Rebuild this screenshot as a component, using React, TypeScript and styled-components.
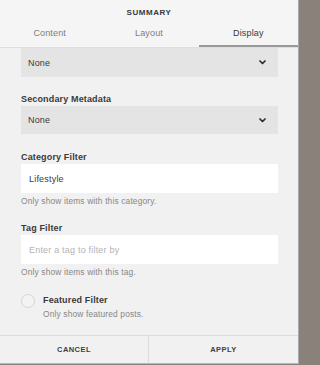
import React from "react";
import styled, { createGlobalStyle } from "styled-components";

const Global = createGlobalStyle`
  html, body { margin: 0; padding: 0; }
  body {
    background: #8a817b;
    font-family: "Liberation Sans", Arial, sans-serif;
    -webkit-font-smoothing: antialiased;
  }
`;

const Panel = styled.div`
  width: 298px;
  height: 363px;
  background: #f1f1f1;
  border-right: 1px solid #a9a9a9;
  border-bottom: 1px solid #b8b8b8;
  display: flex;
  flex-direction: column;
  overflow: hidden;
`;

const Header = styled.div`
  background: #f5f5f5;
  border-bottom: 1px solid #dedede;
`;

const Title = styled.div`
  height: 24px;
  display: flex;
  align-items: center;
  justify-content: center;
  font-size: 8px;
  font-weight: 700;
  letter-spacing: 0.55px;
  color: #3a3a3a;
`;

const Tabs = styled.div`
  display: grid;
  grid-template-columns: 1fr 1fr 1fr;
`;

const Tab = styled.div<{ $active?: boolean }>`
  height: 18px;
  padding-bottom: 3px;
  display: flex;
  align-items: center;
  justify-content: center;
  font-size: 9px;
  letter-spacing: 0.15px;
  color: ${(p) => (p.$active ? "#3a3a3a" : "#7d7d7d")};
  border-bottom: 2px solid ${(p) => (p.$active ? "#9a9a9a" : "transparent")};
`;

const Content = styled.div`
  flex: 1;
  overflow: hidden;
  padding: 0 20px 0 21px;
`;

const Field = styled.div<{ $gap?: number }>`
  margin-top: ${(p) => p.$gap ?? 16}px;
`;

const Label = styled.div`
  font-size: 9px;
  line-height: 12px;
  font-weight: 700;
  letter-spacing: 0.15px;
  color: #3a3a3a;
  margin-bottom: 1px;
`;

const Select = styled.div<{ $h?: number }>`
  height: ${(p) => p.$h ?? 28}px;
  background: #e4e4e4;
  display: flex;
  align-items: center;
  justify-content: space-between;
  padding: 0 12px 0 7px;
  font-size: 9px;
  letter-spacing: 0.15px;
  color: #3a3a3a;
`;

const Input = styled.div<{ $placeholder?: boolean }>`
  height: 29px;
  background: #ffffff;
  display: flex;
  align-items: center;
  padding: 0 8px;
  font-size: 9px;
  letter-spacing: 0.2px;
  color: ${(p) => (p.$placeholder ? "#b4b4b4" : "#3a3a3a")};
`;

const Help = styled.div<{ $tight?: boolean }>`
  margin-top: ${(p) => (p.$tight ? 1 : 2)}px;
  font-size: 8.4px;
  line-height: 12px;
  letter-spacing: 0.15px;
  color: #878787;
`;

const CheckRow = styled.div`
  margin-top: 16px;
  display: flex;
  gap: 8px;
`;

const Radio = styled.div`
  width: 12px;
  height: 12px;
  border: 1px solid #d6d6d6;
  border-radius: 50%;
  background: #f3f3f3;
  flex: none;
`;

const CheckText = styled.div`
  display: flex;
  flex-direction: column;
`;

const Footer = styled.div`
  height: 27px;
  border-top: 1px solid #dcdcdc;
  display: grid;
  grid-template-columns: 149px 1fr;
`;

const FooterButton = styled.div<{ $divider?: boolean }>`
  display: flex;
  align-items: center;
  justify-content: center;
  font-size: 7.5px;
  font-weight: 700;
  letter-spacing: 0.45px;
  color: #3f3f3f;
  border-right: ${(p) => (p.$divider ? "1px solid #dcdcdc" : "none")};
`;

const Chevron = () => (
  <svg width="7" height="5" viewBox="0 0 7 5">
    <polyline
      points="1,1 3.5,3.5 6,1"
      fill="none"
      stroke="#2e2e2e"
      strokeWidth="1.7"
      strokeLinecap="round"
      strokeLinejoin="round"
    />
  </svg>
);

export default function App() {
  return (
    <>
      <Global />
      <Panel>
        <Header>
          <Title>SUMMARY</Title>
          <Tabs>
            <Tab>Content</Tab>
            <Tab>Layout</Tab>
            <Tab $active>Display</Tab>
          </Tabs>
        </Header>
        <Content>
          <Select $h={29}>
            <span>None</span>
            <Chevron />
          </Select>
          <Field $gap={16}>
            <Label>Secondary Metadata</Label>
            <Select>
              <span>None</span>
              <Chevron />
            </Select>
          </Field>
          <Field $gap={17}>
            <Label>Category Filter</Label>
            <Input>Lifestyle</Input>
            <Help>Only show items with this category.</Help>
          </Field>
          <Field $gap={15}>
            <Label>Tag Filter</Label>
            <Input $placeholder>Enter a tag to filter by</Input>
            <Help>Only show items with this tag.</Help>
          </Field>
          <CheckRow>
            <Radio />
            <CheckText>
              <Label>Featured Filter</Label>
              <Help $tight>Only show featured posts.</Help>
            </CheckText>
          </CheckRow>
        </Content>
        <Footer>
          <FooterButton $divider>CANCEL</FooterButton>
          <FooterButton>APPLY</FooterButton>
        </Footer>
      </Panel>
    </>
  );
}
